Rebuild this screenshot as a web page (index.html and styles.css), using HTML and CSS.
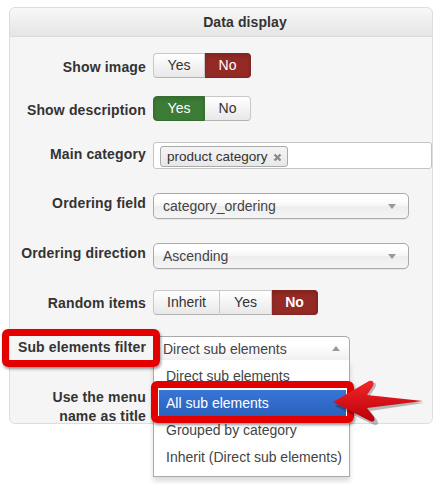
FILE: index.html
```html
<!DOCTYPE html>
<html lang="en">
<head>
    <meta charset="UTF-8">
    <title>Data display</title>
    <link rel="stylesheet" href="styles.css">
</head>
<body>
    <div class="panel">
        <div class="panel-head">Data display</div>
        <div class="panel-body">
            <div class="row r-image">
                <label class="lbl">Show image</label>
                <div class="btn-group">
                    <span class="btn w-yes">Yes</span>
                    <span class="btn w-no on-red">No</span>
                </div>
            </div>
            <div class="row r-desc">
                <label class="lbl">Show description</label>
                <div class="btn-group">
                    <span class="btn w-yes on-green">Yes</span>
                    <span class="btn w-no">No</span>
                </div>
            </div>
            <div class="row r-cat">
                <label class="lbl">Main category</label>
                <div class="multi">
                    <span class="tag">product category
                        <svg class="tag-x" width="9" height="9" viewBox="0 0 9 9"><path d="M1.5 1.5 L7.5 7.5 M7.5 1.5 L1.5 7.5" stroke="#8a8a8a" stroke-width="2.3"/></svg>
                    </span>
                </div>
            </div>
            <div class="row r-field">
                <label class="lbl">Ordering field</label>
                <div class="select">category_ordering <span class="caret-down"></span></div>
            </div>
            <div class="row r-dir">
                <label class="lbl">Ordering direction</label>
                <div class="select">Ascending <span class="caret-down"></span></div>
            </div>
            <div class="row r-random">
                <label class="lbl">Random items</label>
                <div class="btn-group">
                    <span class="btn w-inherit">Inherit</span>
                    <span class="btn w-yes">Yes</span>
                    <span class="btn w-no bold on-red">No</span>
                </div>
            </div>
            <div class="row r-sub">
                <label class="lbl">Sub elements filter</label>
                <div class="dd">
                    <div class="dd-head">Direct sub elements <span class="caret-up"></span></div>
                    <ul class="dd-list">
                        <li>Direct sub elements</li>
                        <li class="hl">All sub elements</li>
                        <li>Grouped by category</li>
                        <li>Inherit (Direct sub elements)</li>
                    </ul>
                </div>
            </div>
            <div class="row r-menu">
                <label class="lbl">Use the menu<br>name as title</label>
            </div>
        </div>
    </div>

    <div class="mark mark-label"></div>
    <div class="mark mark-item"></div>
    <svg class="pointer" width="111" height="70" viewBox="0 0 111 70">
        <defs>
            <linearGradient id="redfill" x1="0" y1="0" x2="0" y2="1">
                <stop offset="0" stop-color="#f2262a"/>
                <stop offset="1" stop-color="#b80008"/>
            </linearGradient>
        </defs>
        <path d="M5 36 L44 55 Q50 56 47 50 L40 41 L94 33 L39 27 L45 18 Q48 12 42 13 Z" fill="rgba(0,0,0,0.25)"/>
        <path d="M3 32 L40 51 Q46 53 44 47 L37 38 L93 31 L37 25 L43 16 Q45 10 39 11 Z" fill="url(#redfill)"/>
    </svg>
</body>
</html>
```

FILE: styles.css
```css
* {
    box-sizing: border-box;
}

body {
    margin: 0;
    position: relative;
    min-height: 484px;
    font-family: "Liberation Sans", Arial, sans-serif;
    color: #333;
    background: #fff;
}

.panel {
    margin: 7px 0 0 9px;
    width: 424px;
    height: 417px;
    border: 1px solid #ddd;
    border-radius: 6px;
    background: #f5f5f5;
}

.panel-head {
    height: 29px;
    border-bottom: 1px solid #dcdcdc;
    border-radius: 6px 6px 0 0;
    background: linear-gradient(#f8f8f8, #e5e5e5);
    padding-left: 48px;
    text-align: center;
    font-size: 14px;
    font-weight: bold;
    line-height: 29px;
    letter-spacing: 0.1px;
}

.panel-body {
    padding-top: 16px;
}

.row {
    display: flex;
    align-items: flex-start;
    gap: 7px;
}

.lbl {
    width: 136px;
    flex: none;
    text-align: right;
    font-size: 14px;
    font-weight: bold;
    line-height: 19px;
    letter-spacing: 0.15px;
}

.r-image { height: 43px; }
.r-image .lbl { padding-top: 5px; }
.r-desc { height: 46px; }
.r-desc .lbl { padding-top: 5px; }
.r-cat { height: 51px; }
.r-cat .lbl { padding-top: 3px; }
.r-field { height: 50px; }
.r-field .lbl { padding-top: 1px; }
.r-dir { height: 47px; }
.r-dir .lbl { padding-top: 1px; }
.r-random { height: 47px; }
.r-random .lbl { padding-top: 4px; }
.r-sub { height: 49px; }
.r-sub .lbl { padding-top: 1px; }
.r-menu { height: 37px; }
.r-menu .lbl { padding-top: 2px; }

/* toggle buttons */
.btn-group {
    display: flex;
    height: 25px;
}

.btn {
    display: block;
    text-align: center;
    font-size: 14px;
    line-height: 23px;
    color: #333;
    border: 1px solid #c8c8c8;
    border-bottom-color: #b3b3b3;
    border-left-width: 0;
    background: linear-gradient(#fff, #e8e8e8);
}

.btn:first-child {
    border-left-width: 1px;
    border-radius: 4px 0 0 4px;
}

.btn:last-child {
    border-radius: 0 4px 4px 0;
}

.w-yes { width: 52px; }
.w-no { width: 46px; }
.w-inherit { width: 67px; }
.bold { font-weight: bold; }

.on-red {
    background: #942a25;
    border-color: #822420;
    color: #fff;
    box-shadow: inset 0 2px 4px rgba(0, 0, 0, 0.15);
}

.on-green {
    background: #3d7c37;
    border-color: #356d30;
    color: #fff;
    box-shadow: inset 0 2px 4px rgba(0, 0, 0, 0.15);
}

/* multi select */
.multi {
    width: 280px;
    height: 27px;
    border: 1px solid #c4c4c4;
    border-radius: 3px;
    background: #fff;
    padding: 3px 0 0 6px;
}

.tag {
    display: inline-flex;
    align-items: center;
    height: 21px;
    padding: 0 5px 0 6px;
    gap: 5px;
    border: 1px solid #aaa;
    border-radius: 3px;
    background: linear-gradient(#f4f4f4, #e8e8e8);
    font-size: 13.5px;
    color: #333;
}

.tag-x {
    margin-top: 2px;
}

/* selects */
.select {
    width: 256px;
    height: 26px;
    display: flex;
    align-items: center;
    justify-content: space-between;
    padding: 0 12px 0 9px;
    border: 1px solid #aaa;
    border-radius: 5px;
    background: linear-gradient(#fff 20%, #f6f6f6 50%, #eee 52%, #f4f4f4);
    box-shadow: 0 1px 0 rgba(0, 0, 0, 0.05);
    font-size: 14px;
    color: #444;
}

.caret-down {
    border-left: 4px solid transparent;
    border-right: 4px solid transparent;
    border-top: 5px solid #999;
}

.caret-up {
    border-left: 4px solid transparent;
    border-right: 4px solid transparent;
    border-bottom: 5px solid #999;
}

.dd {
    position: relative;
    width: 197px;
    margin-top: -1px;
}

.dd-head {
    height: 24px;
    display: flex;
    align-items: center;
    justify-content: space-between;
    padding: 0 9px 0 9px;
    border: 1px solid #aaa;
    border-bottom: 0;
    border-radius: 5px 5px 0 0;
    background: linear-gradient(#fff 30%, #f0f0f0);
    font-size: 14px;
    color: #444;
}

.dd-list {
    position: absolute;
    top: 24px;
    left: 0;
    width: 197px;
    margin: 0;
    padding: 3px 3px 5px 5px;
    list-style: none;
    background: #fff;
    border: 1px solid #aaa;
    border-top: 0;
    box-shadow: 0 4px 5px rgba(0, 0, 0, 0.15);
}

.dd-list li {
    height: 26px;
    margin-bottom: 1px;
    padding-left: 7px;
    font-size: 14px;
    line-height: 26px;
    color: #444;
    white-space: nowrap;
}

.dd-list li.hl {
    background: linear-gradient(#3875d7, #2a62bc);
    color: #fff;
}

/* annotations */
.mark {
    position: absolute;
    border: 7px solid #e20000;
    border-radius: 6px;
    box-shadow: 1px 2px 3px rgba(0, 0, 0, 0.4);
}

.mark-label {
    left: 2px;
    top: 329px;
    width: 158px;
    height: 38px;
}

.mark-item {
    left: 151px;
    top: 381px;
    width: 203px;
    height: 42px;
}

.pointer {
    position: absolute;
    left: 330px;
    top: 370px;
}
```
